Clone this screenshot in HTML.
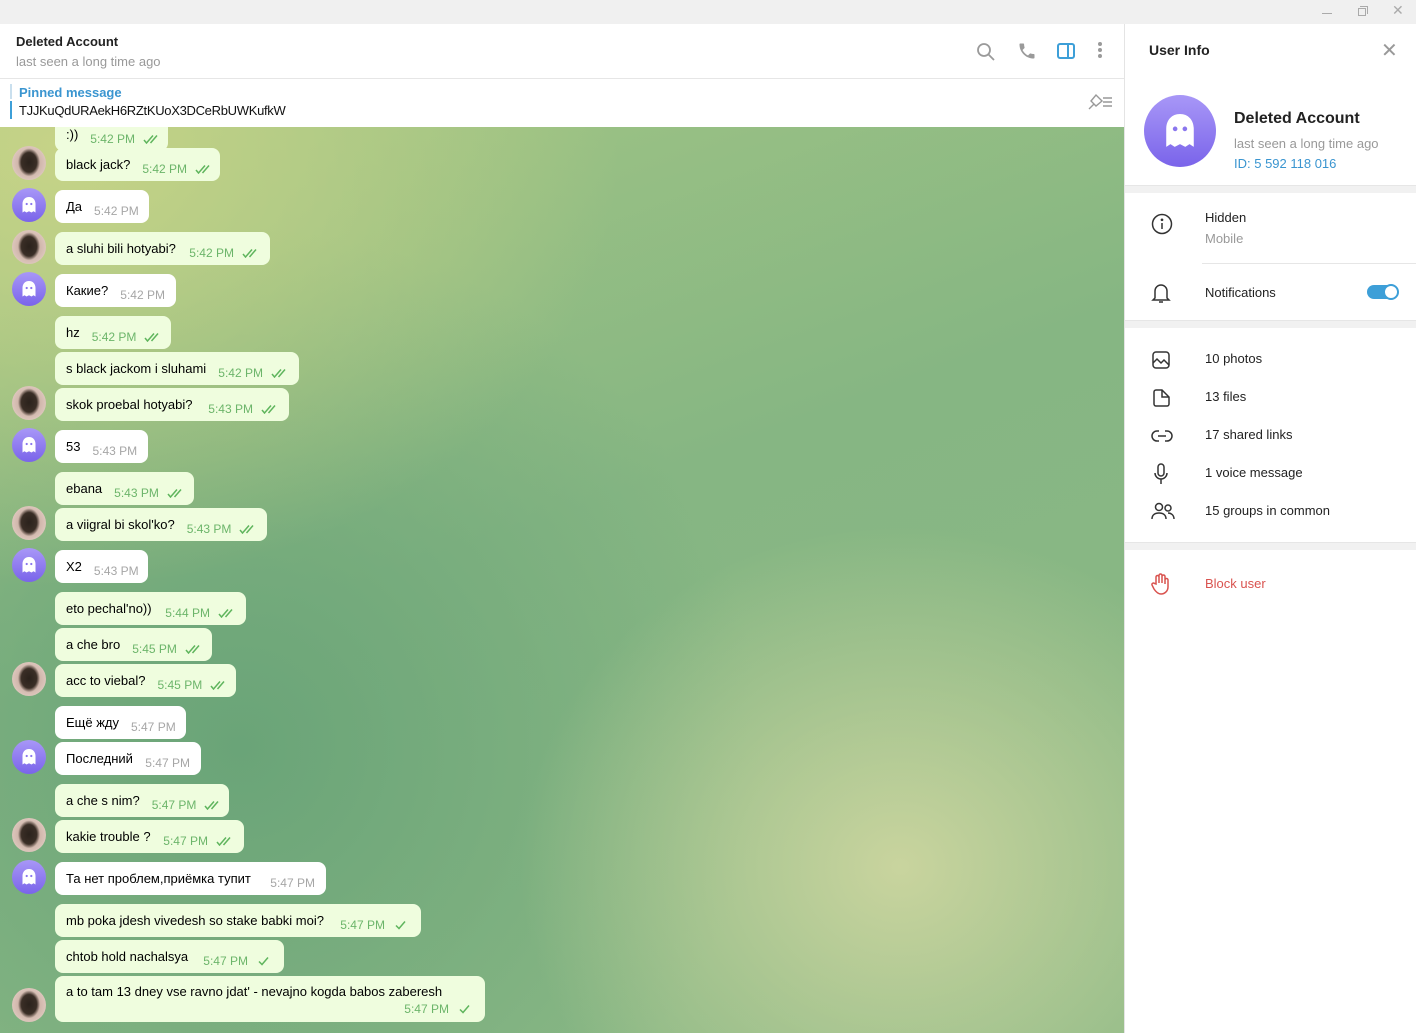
<!DOCTYPE html>
<html><head><meta charset="utf-8">
<style>
*{box-sizing:border-box;margin:0;padding:0}
body{width:1416px;height:1033px;overflow:hidden;font-family:"Liberation Sans","Noto Sans CJK SC",sans-serif;background:#f0f0f0;position:relative}
.tb{position:absolute;left:0;top:0;width:1416px;height:24px;background:#f0f0f0}
.hdr{position:absolute;left:0;top:24px;width:1124px;height:55px;background:#fff;border-bottom:1px solid #e6e6e6}
.pin{position:absolute;left:0;top:79px;width:1124px;height:48px;background:#fff}
.chat{position:absolute;left:0;top:127px;width:1124px;height:906px;overflow:hidden;
background:
radial-gradient(ellipse 380px 340px at 900px 740px,#c9d49e 0%,rgba(201,212,158,0) 100%),
radial-gradient(ellipse 560px 440px at 60px 20px,#c6d387 0%,rgba(198,211,135,0) 100%),
radial-gradient(ellipse 520px 520px at 240px 620px,#6aa478 0%,rgba(106,164,120,0) 100%),
linear-gradient(160deg,#a3c684 0%,#86b683 45%,#8cb986 100%)}
.b{position:absolute;left:55px;height:33px;border-radius:8px;background:#effdde;display:flex;align-items:center;padding:0 11px;font-size:13px;color:#000;white-space:nowrap}
.b.w{background:#fff}
.b .t{margin-left:auto;padding-left:12px;font-size:12px;color:#6cb56a;position:relative;top:4px}
.b.w .t{color:#a6a6a6}
.ck{display:inline-block;margin-left:8px;width:17px;height:10px;vertical-align:-1px}
.av{position:absolute;left:12px;width:34px;height:34px;border-radius:50%}
.g{background:linear-gradient(#a897f7,#7a64ea)}
.d{background:radial-gradient(ellipse 11px 14px at 50% 48%,#2b221c 0%,#3a2e26 70%,rgba(58,46,38,0) 100%),radial-gradient(circle,#b89a8c 0%,#ecd8d0 100%)}
.rp{position:absolute;left:1124px;top:24px;width:292px;height:1009px;background:#fff;border-left:1px solid #e4e4e4}
.sep{position:absolute;left:0;width:292px;height:8px;background:#f1f1f1;border-top:1px solid #e6e6e6}
.it{position:absolute;left:80px;font-size:13px;color:#222}
.ic{position:absolute;left:26px}
</style></head><body>
<div class="tb">
<div style="position:absolute;left:1322px;top:13px;width:10px;height:1px;background:#aaa"></div>
<div style="position:absolute;left:1358px;top:8px;width:8px;height:8px;border:1px solid #aaa"></div>
<div style="position:absolute;left:1360px;top:6px;width:8px;height:8px;border-top:1px solid #aaa;border-right:1px solid #aaa"></div>
<div style="position:absolute;left:1392px;top:2px;font-size:14px;color:#aaa">✕</div>
</div>
<div class="hdr">
<div style="position:absolute;left:16px;top:10px;font-size:13px;font-weight:bold;color:#222">Deleted Account</div>
<div style="position:absolute;left:16px;top:30px;font-size:13px;color:#999">last seen a long time ago</div>
<svg style="position:absolute;left:976px;top:18px" width="20" height="20" viewBox="0 0 20 20" fill="none" stroke="#9a9a9a" stroke-width="1.8"><circle cx="8" cy="8" r="6"/><path d="M12.5 12.5 L18 18"/></svg>
<svg style="position:absolute;left:1017px;top:17px" width="20" height="20" viewBox="0 0 24 24"><path fill="#9a9a9a" d="M6.6 10.8c1.4 2.8 3.8 5.1 6.6 6.6l2.2-2.2c.3-.3.7-.4 1-.2 1.1.4 2.3.6 3.6.6.6 0 1 .4 1 1V20c0 .6-.4 1-1 1C10.6 21 3 13.4 3 4c0-.6.4-1 1-1h3.5c.6 0 1 .4 1 1 0 1.3.2 2.5.6 3.6.1.3 0 .7-.2 1z"/></svg>
<svg style="position:absolute;left:1056px;top:17px" width="20" height="20" viewBox="0 0 20 20" fill="none" stroke="#3d9fd8" stroke-width="2"><rect x="2" y="3" width="16" height="14" rx="2"/><path d="M12 3v14"/></svg>
<div style="position:absolute;left:1098px;top:18px;width:4px;height:4px;border-radius:2px;background:#9a9a9a;box-shadow:0 6px 0 #9a9a9a,0 12px 0 #9a9a9a"></div>
</div>
<div class="pin">
<div style="position:absolute;left:10px;top:5px;width:2px;height:15px;background:#c9dfee"></div>
<div style="position:absolute;left:10px;top:22px;width:2px;height:18px;background:#3d9fd8"></div>
<div style="position:absolute;left:19px;top:6px;font-size:13px;font-weight:bold;color:#3a95d0">Pinned message</div>
<div style="position:absolute;left:19px;top:24px;font-size:13px;color:#111;letter-spacing:-0.3px">TJJKuQdURAekH6RZtKUoX3DCeRbUWKufkW</div>
<svg style="position:absolute;left:1086px;top:14px" width="28" height="18" viewBox="0 0 28 18" fill="none" stroke="#999" stroke-width="1.4"><path d="M3 16l5-5M5 8l5-6 6 6-6 5z"/><path d="M17 5h9M17 9h9M17 13h9"/></svg>
</div>
<div class="chat">
<svg width="0" height="0" style="position:absolute"><defs>
<symbol id="c2" viewBox="0 0 17 10"><path d="M1 6l2.5 3L10 1.5M7.5 9L14 1.5" fill="none" stroke="#5fb55d" stroke-width="1.5"/></symbol>
<symbol id="c1" viewBox="0 0 17 10"><path d="M3 5.5l3 3L12 1.5" fill="none" stroke="#5fb55d" stroke-width="1.5"/></symbol>
<symbol id="gh" viewBox="0 0 34 34"><path fill="#fff" d="M17 9c-4 0-6.5 3-6.5 7v8.5l2-1.3 2 1.3 2.5-1.3 2.5 1.3 2-1.3 2 1.3V16c0-4-2.5-7-6.5-7z"/><circle cx="14.7" cy="16" r="1.1" fill="#8a76ee"/><circle cx="19.3" cy="16" r="1.1" fill="#8a76ee"/></symbol>
</defs></svg>

<div class="b" style="top:-9px;width:113px">:))<span class="t">5:42 PM<svg class="ck"><use href="#c2"/></svg></span></div>
<div class="av d" style="top:19px"></div><div class="b" style="top:21px;width:165px">black jack?<span class="t">5:42 PM<svg class="ck"><use href="#c2"/></svg></span></div>
<div class="av g" style="top:61px"><svg width="34" height="34"><use href="#gh"/></svg></div><div class="b w" style="top:63px;width:94px">Да<span class="t">5:42 PM</span></div>
<div class="av d" style="top:103px"></div><div class="b" style="top:105px;width:215px">a sluhi bili hotyabi?<span class="t">5:42 PM<svg class="ck"><use href="#c2"/></svg></span></div>
<div class="av g" style="top:145px"><svg width="34" height="34"><use href="#gh"/></svg></div><div class="b w" style="top:147px;width:121px">Какие?<span class="t">5:42 PM</span></div>
<div class="b" style="top:189px;width:116px">hz<span class="t">5:42 PM<svg class="ck"><use href="#c2"/></svg></span></div>
<div class="b" style="top:225px;width:244px">s black jackom i sluhami<span class="t">5:42 PM<svg class="ck"><use href="#c2"/></svg></span></div>
<div class="av d" style="top:259px"></div><div class="b" style="top:261px;width:234px">skok proebal hotyabi?<span class="t">5:43 PM<svg class="ck"><use href="#c2"/></svg></span></div>
<div class="av g" style="top:301px"><svg width="34" height="34"><use href="#gh"/></svg></div><div class="b w" style="top:303px;width:93px">53<span class="t">5:43 PM</span></div>
<div class="b" style="top:345px;width:139px">ebana<span class="t">5:43 PM<svg class="ck"><use href="#c2"/></svg></span></div>
<div class="av d" style="top:379px"></div><div class="b" style="top:381px;width:212px">a viigral bi skol'ko?<span class="t">5:43 PM<svg class="ck"><use href="#c2"/></svg></span></div>
<div class="av g" style="top:421px"><svg width="34" height="34"><use href="#gh"/></svg></div><div class="b w" style="top:423px;width:93px">X2<span class="t">5:43 PM</span></div>
<div class="b" style="top:465px;width:191px">eto pechal'no))<span class="t">5:44 PM<svg class="ck"><use href="#c2"/></svg></span></div>
<div class="b" style="top:501px;width:157px">a che bro<span class="t">5:45 PM<svg class="ck"><use href="#c2"/></svg></span></div>
<div class="av d" style="top:535px"></div><div class="b" style="top:537px;width:181px">acc to viebal?<span class="t">5:45 PM<svg class="ck"><use href="#c2"/></svg></span></div>
<div class="b w" style="top:579px;width:131px">Ещё жду<span class="t">5:47 PM</span></div>
<div class="av g" style="top:613px"><svg width="34" height="34"><use href="#gh"/></svg></div><div class="b w" style="top:615px;width:146px">Последний<span class="t">5:47 PM</span></div>
<div class="b" style="top:657px;width:174px">a che s nim?<span class="t">5:47 PM<svg class="ck"><use href="#c2"/></svg></span></div>
<div class="av d" style="top:691px"></div><div class="b" style="top:693px;width:189px">kakie trouble ?<span class="t">5:47 PM<svg class="ck"><use href="#c2"/></svg></span></div>
<div class="av g" style="top:733px"><svg width="34" height="34"><use href="#gh"/></svg></div><div class="b w" style="top:735px;width:271px">Та нет проблем,приёмка тупит<span class="t">5:47 PM</span></div>
<div class="b" style="top:777px;width:366px">mb poka jdesh vivedesh so stake babki moi?<span class="t">5:47 PM<svg class="ck"><use href="#c1"/></svg></span></div>
<div class="b" style="top:813px;width:229px">chtob hold nachalsya<span class="t">5:47 PM<svg class="ck"><use href="#c1"/></svg></span></div>
<div class="av d" style="top:861px"></div><div class="b" style="top:849px;width:430px;height:46px;display:block;padding-top:8px">a to tam 13 dney vse ravno jdat' - nevajno kogda babos zaberesh<span class="t" style="position:absolute;right:11px;top:26px">5:47 PM<svg class="ck"><use href="#c1"/></svg></span></div>
</div>

<div class="rp">
<div style="position:absolute;left:24px;top:18px;font-size:14px;font-weight:bold;color:#222">User Info</div>
<div style="position:absolute;left:256px;top:14px;font-size:20px;color:#999;font-weight:300">✕</div>
<div style="position:absolute;left:19px;top:71px;width:72px;height:72px;border-radius:50%;background:linear-gradient(#a897f7,#7a64ea)"><svg width="72" height="72" viewBox="0 0 34 34"><use href="#gh"/></svg></div>
<div style="position:absolute;left:109px;top:86px;font-size:16px;font-weight:bold;color:#222">Deleted Account</div>
<div style="position:absolute;left:109px;top:112px;font-size:13px;color:#999">last seen a long time ago</div>
<div style="position:absolute;left:109px;top:132px;font-size:13px;color:#3a95d0">ID: 5 592 118 016</div>
<div class="sep" style="top:161px"></div>
<svg class="ic" style="top:189px" width="22" height="22" viewBox="0 0 22 22" fill="none" stroke="#333" stroke-width="1.5"><circle cx="11" cy="11" r="9.5"/><path d="M11 10v6"/><circle cx="11" cy="6.8" r=".6" fill="#333"/></svg>
<div class="it" style="top:186px">Hidden</div>
<div class="it" style="top:207px;color:#999">Mobile</div>
<div style="position:absolute;left:77px;top:239px;width:215px;height:1px;background:#e6e6e6"></div>
<svg class="ic" style="top:258px" width="20" height="22" viewBox="0 0 20 22" fill="none" stroke="#333" stroke-width="1.5"><path d="M4 16V9a6 6 0 0112 0v7l2 2H2z"/><path d="M8 20h4"/></svg>
<div class="it" style="top:261px">Notifications</div>
<div style="position:absolute;left:242px;top:261px;width:30px;height:14px;border-radius:7px;background:#3d9fd8"></div>
<div style="position:absolute;left:258px;top:260px;width:16px;height:16px;border-radius:50%;background:#fff;border:2px solid #3d9fd8"></div>
<div class="sep" style="top:296px"></div>
<svg class="ic" style="top:326px" width="20" height="20" viewBox="0 0 20 20" fill="none" stroke="#333" stroke-width="1.5"><rect x="2" y="2" width="16" height="16" rx="3"/><path d="M2 13l4-4 4 4 3-3 5 5"/></svg>
<div class="it" style="top:327px">10 photos</div>
<svg class="ic" style="top:364px" width="20" height="20" viewBox="0 0 20 20" fill="none" stroke="#333" stroke-width="1.5"><path d="M5 2h6l7 7v7a2 2 0 01-2 2H5a2 2 0 01-2-2V4a2 2 0 012-2z"/><path d="M11 2v7h7"/></svg>
<div class="it" style="top:365px">13 files</div>
<svg class="ic" style="top:402px" width="22" height="20" viewBox="0 0 22 20" fill="none" stroke="#333" stroke-width="1.5"><path d="M8 5H6a5 5 0 000 10h2M14 5h2a5 5 0 010 10h-2M7 10h8"/></svg>
<div class="it" style="top:403px">17 shared links</div>
<svg class="ic" style="top:439px" width="20" height="22" viewBox="0 0 20 22" fill="none" stroke="#333" stroke-width="1.5"><rect x="7" y="1" width="6" height="12" rx="3"/><path d="M4 10a6 6 0 0012 0M10 16v5"/></svg>
<div class="it" style="top:441px">1 voice message</div>
<svg class="ic" style="top:477px" width="24" height="20" viewBox="0 0 24 20" fill="none" stroke="#333" stroke-width="1.5"><circle cx="8" cy="6" r="3.5"/><path d="M1 18c0-4 3-6 7-6s7 2 7 6"/><circle cx="17" cy="7" r="3"/><path d="M17 12c3 0 6 2 6 6"/></svg>
<div class="it" style="top:479px">15 groups in common</div>
<div class="sep" style="top:518px"></div>
<svg class="ic" style="top:549px" width="20" height="22" viewBox="0 0 20 22" fill="none" stroke="#d9534f" stroke-width="1.5"><path d="M5 11V4a1.5 1.5 0 013 0v6V2.5a1.5 1.5 0 013 0V10V3.5a1.5 1.5 0 013 0V11v-4a1.5 1.5 0 013 0v7a7 7 0 01-7 7c-3 0-5-2-7-5l-2-4a1.5 1.5 0 012.5-1.5z"/></svg>
<div class="it" style="top:552px;color:#d9534f">Block user</div>
</div>
</body></html>
